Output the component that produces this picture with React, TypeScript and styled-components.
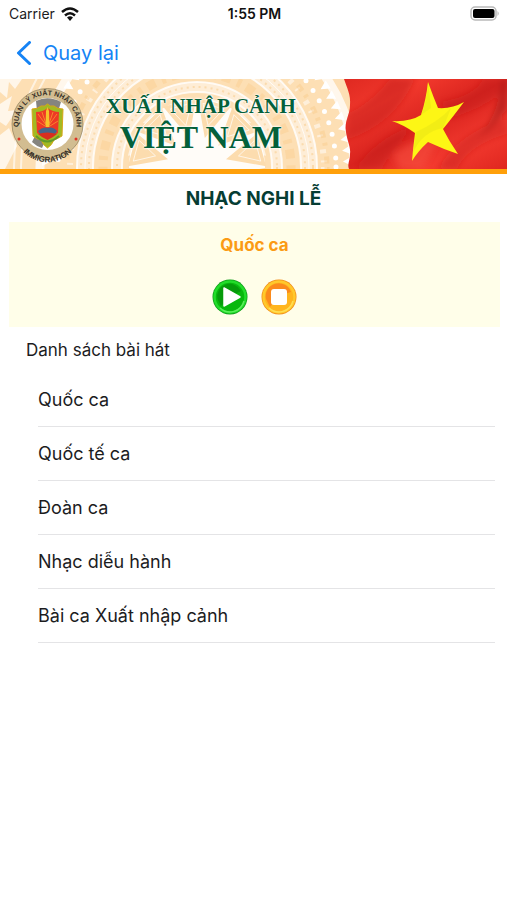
import React, { useState } from "react";
import styled, { createGlobalStyle } from "styled-components";

const GlobalStyle = createGlobalStyle`
  *, *::before, *::after { box-sizing: border-box; }
  body {
    margin: 0;
    background: #fff;
    color: #1c1c1e;
    font-family: Inter, Roboto, "Liberation Sans", sans-serif;
  }
  button { font: inherit; color: inherit; border: 0; padding: 0; background: none; cursor: pointer; }
`;

const Screen = styled.main`
  display: flex;
  flex-direction: column;
  min-height: 100vh;
  background: #fff;
`;

const StatusBar = styled.div`
  display: grid;
  grid-template-columns: 1fr auto 1fr;
  align-items: center;
  height: 27px;
  padding: 0 7px 0 9px;
  font-size: 14px;
`;

const Carrier = styled.span`
  display: flex;
  align-items: center;
  gap: 6px;
`;

const Clock = styled.time`
  font-weight: 600;
  color: #111;
`;

const BatteryIcon = styled.svg`
  justify-self: end;
`;

const NavBar = styled.nav`
  display: flex;
  align-items: center;
  height: 52px;
  padding: 0 16px;
`;

const BackLink = styled.a`
  display: flex;
  align-items: center;
  gap: 11px;
  color: #1583f5;
  font-size: 20px;
  line-height: 24px;
  text-decoration: none;
`;

const Banner = styled.header`
  display: grid;
  border-bottom: 5px solid #ffa00a;
  overflow: hidden;
  > * { grid-area: 1 / 1; }
`;

const BannerArt = styled.svg`
  display: block;
  width: 100%;
  height: 90px;
`;

const BannerText = styled.div`
  z-index: 1;
  justify-self: start;
  align-self: center;
  margin-left: 106px;
  text-align: center;
  font-family: "Liberation Serif", serif;
  font-weight: 700;
  color: #04603a;
  text-shadow: 0 0 2px #fff, 0 0 2px #fff, 0 0 3px #fff;
`;

const BannerLine = styled.div<{ $large?: boolean }>`
  font-size: ${(p) => (p.$large ? 32 : 21)}px;
  line-height: ${(p) => (p.$large ? 36 : 26)}px;
`;

const Title = styled.h1`
  margin: 0;
  padding-top: 2px;
  font-size: 19px;
  font-weight: 700;
  line-height: 46px;
  text-align: center;
  color: #063d33;
`;

const Player = styled.section`
  display: flex;
  flex-direction: column;
  align-items: center;
  gap: 22px;
  margin: 0 7px 0 9px;
  padding: 11px 0 12px;
  background: #fffee9;
`;

const NowPlaying = styled.h2`
  margin: 0;
  font-size: 17px;
  font-weight: 700;
  line-height: 24px;
  color: #fb9b14;
`;

const Controls = styled.div`
  display: flex;
  gap: 13px;
`;

const RoundButton = styled.button`
  display: block;
  width: 36px;
  height: 36px;
  border-radius: 50%;
  svg { display: block; }
`;

const ListLabel = styled.h3`
  margin: 0;
  padding: 11px 26px;
  font-size: 17px;
  font-weight: 400;
  line-height: 24px;
`;

const SongList = styled.ul`
  margin: 0 12px 0 38px;
  padding: 0;
  list-style: none;
`;

const SongItem = styled.li`
  border-bottom: 1px solid #e4e4e6;
`;

const SongButton = styled.button`
  display: block;
  width: 100%;
  height: 53px;
  font-size: 18px;
  line-height: 24px;
  text-align: left;
`;

const songs = ["Quốc ca", "Quốc tế ca", "Đoàn ca", "Nhạc diễu hành", "Bài ca Xuất nhập cảnh"];

const CX = 197;
const CY = 88;

const point = (radius: number, angle: number) =>
  `${(CX + radius * Math.cos(angle)).toFixed(1)} ${(CY + radius * Math.sin(angle)).toFixed(1)}`;

const wedges = (base: number, tip: number, count: number, half: number) =>
  Array.from({ length: count }, (_, i) => {
    const a = ((i + 0.5) / count) * Math.PI * 2;
    return `M${point(base, a - half)}L${point(tip, a)}L${point(base, a + half)}Z`;
  }).join("");

function DrumPattern() {
  return (
    <g>
      <rect width="507" height="90" fill="#fddfb4" />
      <path d="M0 0L22 0 15 10 9 3 7 19 0 13ZM0 25L12 17 8 32 17 31 6 47 0 43ZM0 56L9 49 17 67 5 90H0Z" fill="#fff" opacity=".7" />
      <g fill="none" stroke="#fff">
        <circle cx={CX} cy={CY} r="157" strokeWidth="9" opacity=".75" />
        <circle cx={CX} cy={CY} r="176" strokeWidth="2" opacity=".6" />
        <circle cx={CX} cy={CY} r="183" strokeWidth="2" opacity=".6" />
        <circle cx={CX} cy={CY} r="139" strokeWidth="5" strokeDasharray="0 12" strokeLinecap="round" />
        <circle cx={CX} cy={CY} r="127" strokeWidth="6" strokeDasharray="4 7 2 13" opacity=".5" />
        <circle cx={CX} cy={CY} r="112" strokeWidth="16" opacity=".45" />
        <circle cx={CX} cy={CY} r="120" strokeWidth="2" opacity=".8" />
        <circle cx={CX} cy={CY} r="112" strokeWidth="1" opacity=".8" />
        <circle cx={CX} cy={CY} r="104" strokeWidth="2" opacity=".8" />
        <circle cx={CX} cy={CY} r="80" strokeWidth="10" opacity=".45" />
        <circle cx={CX} cy={CY} r="85" strokeWidth="2" opacity=".8" />
        <circle cx={CX} cy={CY} r="75" strokeWidth="2" opacity=".8" />
      </g>
      <g fill="none" stroke="#f8c985">
        <circle cx={CX} cy={CY} r="130" strokeWidth="5" strokeDasharray="7 5 3 11" opacity=".4" />
        <circle cx={CX} cy={CY} r="116" strokeWidth="2" strokeDasharray="2 4" opacity=".5" />
        <circle cx={CX} cy={CY} r="108" strokeWidth="2" strokeDasharray="2 4" opacity=".5" />
        <circle cx={CX} cy={CY} r="94" strokeWidth="9" strokeDasharray="9 7 4 6" opacity=".35" />
        <circle cx={CX} cy={CY} r="80" strokeWidth="2" strokeDasharray="2 4" opacity=".5" />
      </g>
      <path d={wedges(155, 146, 84, 0.03)} fill="#fff" />
      <path d={wedges(70, 54, 12, 0.1)} fill="#fff" opacity=".6" />
      <circle cx={CX} cy={CY} r="68" fill="#fff" opacity=".9" />
      <path d={wedges(69, 30, 12, 0.25)} fill="#fcdcae" />
      <path d={wedges(64, 43, 12, 0.17)} fill="none" stroke="#fff" strokeWidth="1" opacity=".7" />
    </g>
  );
}

function Emblem() {
  return (
    <g>
      <circle cx="47.500" cy="45" r="35.500" fill="#d2bd91" stroke="#806f4c" strokeWidth=".6" />
      <circle cx="47.500" cy="45" r="26" fill="#fff" />
      <path d="M36 22Q48 16 61 23L57 36 42 69Q36 67 32 63L43 41 37 32Z" fill="#85847f" />
      <path d="M32 30Q38 30 41 27Q45 28 47.500 25Q50 28 54 27Q57 30 63 30L62 57Q57 60 54 61Q52 66 47.500 69Q43 66 41 61Q36 60 33 57Z" fill="#a2ba22" stroke="#d8a617" strokeWidth="1" />
      <path d="M36 33Q43 33 47.500 29Q53 33 59 33L58 54 47.500 60 37 54Z" fill="#ee3926" />
      <path d="M46 46L38 35M46 45L42 33M49 45L53 33M49 46L57 35M45 47L37 42M50 47L58 42" stroke="#f7852c" strokeWidth="1" />
      <path d="M45.500 48L46 32 47.500 28 49 32 49.500 48Z" fill="#f6c22b" />
      <path d="M38 52Q43 47 47.500 49Q53 47 57 52L55 55H40Z" fill="#46658a" />
      <path d="M38 55Q47 52 57 55L53 58 47.500 61 42 58Z" fill="#d82e20" />
      <path d="M36 57Q47 68 59 57" fill="none" stroke="#629a2a" strokeWidth="2" />
      <path id="emblem-upper" d="M21 57A29 29 0 1 1 74 57" fill="none" />
      <path id="emblem-lower" d="M14 55A34 34 0 0 0 81 55" fill="none" />
      <g fill="#352e25" fontFamily="Liberation Sans, sans-serif" fontWeight="700" fontSize="7">
        <text textAnchor="middle">
          <textPath href="#emblem-upper" startOffset="50%">QUẢN LÝ XUẤT NHẬP CẢNH</textPath>
        </text>
        <text textAnchor="middle" fontSize="8">
          <textPath href="#emblem-lower" startOffset="50%">IMMIGRATION</textPath>
        </text>
      </g>
      <circle cx="19" cy="60" r="1.500" fill="#e03224" />
      <circle cx="76" cy="60" r="1.500" fill="#e03224" />
    </g>
  );
}

function Flag() {
  return (
    <g>
      <path d="M344 0C347 9 351 16 350 26C350 36 344 42 346 53C347 61 351 69 350 75C350 82 347 85 349 90H507V0Z" fill="url(#cloth)" />
      <g clipPath="url(#flag-clip)" filter="url(#soft)">
        <path d="M347 35Q370 25 390 0H415Q394 46 346 61Z" fill="#b91a18" opacity=".38" />
        <path d="M355 90Q379 57 411 48L398 67Q386 80 382 90Z" fill="#b71916" opacity=".35" />
        <path d="M438 90Q457 54 507 39V55Q469 66 457 90Z" fill="#bb1715" opacity=".35" />
        <path d="M440 23Q475 17 483 0H507V9Q485 29 451 39Z" fill="#b91a18" opacity=".35" />
        <path d="M503 0Q496 43 477 59Q491 51 507 30V0Z" fill="#951514" opacity=".5" />
        <path d="M393 76Q417 56 437 63L423 90H400Z" fill="#fa5141" opacity=".5" />
      </g>
      <path d="M428 3Q433 17 438 29Q452 30 464 23Q452 39 443 50Q449 62 458 75Q443 70 428 63Q418 72 412 82Q413 69 415 54Q404 46 392 42Q410 43 421 36Q426 21 428 3Z" fill="#fdf615" />
      <path d="M428 3L431 29 421 36Q427 22 428 3ZM416 53Q438 43 451 29L443 49Q422 53 413 74Z" fill="#e4e316" opacity=".45" />
    </g>
  );
}

function PlayIcon() {
  return (
    <svg width="36" height="36" viewBox="0 0 36 36" aria-hidden="true">
      <circle cx="18" cy="18" r="17.500" fill="#0c9c17" />
      <circle cx="18" cy="18" r="15.500" fill="#08b80d" stroke="#22dc2a" strokeWidth="2.500" />
      <path d="M5.500 20A12.500 12.500 0 0 1 29 12Q19 16 9 27Z" fill="#069b0b" />
      <path d="M8 29A14.500 14.500 0 0 0 32 22" fill="none" stroke="#5cee5c" strokeWidth="1.500" />
      <path d="M12 9L28 18 12 27Z" fill="#fff" stroke="#fff" strokeWidth="1.500" strokeLinejoin="round" />
    </svg>
  );
}

function StopIcon() {
  return (
    <svg width="36" height="36" viewBox="0 0 36 36" aria-hidden="true">
      <circle cx="18" cy="18" r="17.500" fill="#f28d18" />
      <circle cx="18" cy="18" r="15.500" fill="#ffb51e" stroke="#ffc92c" strokeWidth="2.500" />
      <path d="M5 20A13 13 0 0 1 30 13Q18 15 9 28Z" fill="#fb8a1c" />
      <path d="M8 29A14.500 14.500 0 0 0 32 22" fill="none" stroke="#ffdf55" strokeWidth="1.500" />
      <rect x="10" y="10" width="16" height="16" rx="3" fill="#fff" />
    </svg>
  );
}

export default function App() {
  const [current, setCurrent] = useState(songs[0]);
  return (
    <Screen>
      <GlobalStyle />
      <StatusBar>
        <Carrier>
          Carrier
          <svg width="18" height="14" viewBox="0 0 18 14" aria-hidden="true">
            <g fill="none" stroke="#111" strokeWidth="2.500">
              <path d="M1 5Q9-2 17 5" />
              <path d="M4 8.500Q9 4 14 8.500" />
            </g>
            <path d="M6 10.500Q9 8 12 10.500L9 14Z" fill="#111" />
          </svg>
        </Carrier>
        <Clock>1:55 PM</Clock>
        <BatteryIcon width="30" height="15" viewBox="0 0 30 15" role="img" aria-label="Pin đầy">
          <rect x="1" y="1" width="25" height="13" rx="4" fill="#fff" stroke="#b9b9b9" strokeWidth="1.500" />
          <rect x="3" y="3" width="21.500" height="9" rx="2" fill="#000" />
          <path d="M27.500 5Q30 7.500 27.500 10Z" fill="#b9b9b9" />
        </BatteryIcon>
      </StatusBar>
      <NavBar>
        <BackLink href="#">
          <svg width="16" height="24" viewBox="0 0 16 24" aria-hidden="true">
            <path d="M13.500 1.500L2.500 12 13.500 22.500" fill="none" stroke="#1583f5" strokeWidth="3" strokeLinecap="round" strokeLinejoin="round" />
          </svg>
          Quay lại
        </BackLink>
      </NavBar>
      <Banner>
        <BannerArt viewBox="0 0 507 90" preserveAspectRatio="xMinYMid slice" aria-hidden="true">
          <defs>
            <linearGradient id="cloth" x1="0" y1="0" x2="1" y2="1">
              <stop offset="0" stopColor="#df2921" />
              <stop offset=".25" stopColor="#f1382c" />
              <stop offset=".5" stopColor="#d9231e" />
              <stop offset=".75" stopColor="#f33a2f" />
              <stop offset="1" stopColor="#df261f" />
            </linearGradient>
            <filter id="soft"><feGaussianBlur stdDeviation="3" /></filter>
            <clipPath id="flag-clip">
              <path d="M344 0C347 9 351 16 350 26C350 36 344 42 346 53C347 61 351 69 350 75C350 82 347 85 349 90H507V0Z" />
            </clipPath>
          </defs>
          <DrumPattern />
          <Emblem />
          <Flag />
        </BannerArt>
        <BannerText>
          <BannerLine>XUẤT NHẬP CẢNH</BannerLine>
          <BannerLine $large>VIỆT NAM</BannerLine>
        </BannerText>
      </Banner>
      <Title>NHẠC NGHI LỄ</Title>
      <Player>
        <NowPlaying>{current}</NowPlaying>
        <Controls>
          <RoundButton type="button" aria-label="Phát"><PlayIcon /></RoundButton>
          <RoundButton type="button" aria-label="Dừng"><StopIcon /></RoundButton>
        </Controls>
      </Player>
      <ListLabel>Danh sách bài hát</ListLabel>
      <SongList>
        {songs.map((song) => (
          <SongItem key={song}>
            <SongButton type="button" onClick={() => setCurrent(song)}>{song}</SongButton>
          </SongItem>
        ))}
      </SongList>
    </Screen>
  );
}
